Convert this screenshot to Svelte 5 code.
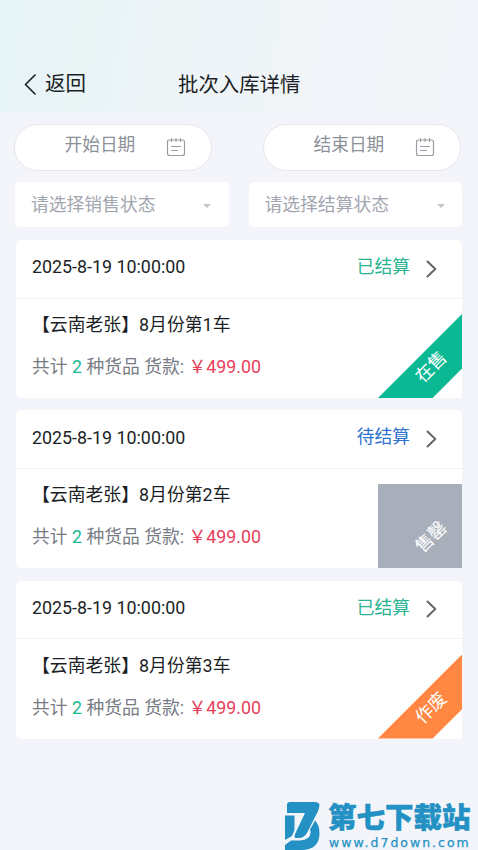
<script>
  const batches = [
    { n: 1, state: '已结算', kind: 'done', tag: '在售', ribbon: 'green' },
    { n: 2, state: '待结算', kind: 'pending', tag: '售罄', ribbon: 'gray' },
    { n: 3, state: '已结算', kind: 'done', tag: '作废', ribbon: 'orange' }
  ];
  const dates = ['开始日期', '结束日期'];
  const selects = ['请选择销售状态', '请选择结算状态'];
</script>

<div class="page">
  <header>
    <svg class="back" width="12" height="21" viewBox="0 0 12 21"><path d="M11 1L1.5 10.5L11 20" /></svg>
    <span class="backtext">返回</span>
    <h1>批次入库详情</h1>
  </header>

  <div class="dates">
    {#each dates as label}
      <div class="date">
        <span>{label}</span>
        <svg width="20" height="20" viewBox="0 0 20 20"><path d="M3.5 3H16.500Q18.500 3 18.500 5V16.500Q18.500 18.500 16.500 18.500H3.500Q1.500 18.500 1.500 16.500V5Q1.500 3 3.500 3ZM5.500 1.500V4.500M10 1.500V4.500M14.500 1.500V4.500M5.500 9.500H14.500M5.500 13.500H11.500" /></svg>
      </div>
    {/each}
  </div>

  <div class="selects">
    {#each selects as label}
      <div class="select"><span>{label}</span><i></i></div>
    {/each}
  </div>

  <main>
    {#each batches as b}
      <section>
        <div class="top">
          <time>2025-8-19 10:00:00</time>
          <span class="state {b.kind}">{b.state}</span>
          <svg width="11" height="18" viewBox="0 0 11 18"><path d="M1.500 1.500L9.300 9L1.500 16.500" /></svg>
        </div>
        <div class="body">
          <h2>【云南老张】8月份第{b.n}车</h2>
          <p>共计 <b>2</b> 种货品 货款: <em>￥499.00</em></p>
        </div>
        <div class="ribbon {b.ribbon}"><span>{b.tag}</span></div>
      </section>
    {/each}
  </main>

  <footer>
    <svg width="36" height="48" viewBox="0 0 36 48">
      <path class="fill" d="M5 0H30Q36 0 34 6Q33 10 31 13L22 31Q19 36 14 36H10Q9 34 10.500 31L20 11H2V3Q2 0 5 0Z" />
      <path class="fill" d="M0 13.500H9.500V28L7 34L0 38Z" />
      <path class="fill" d="M30 18.500Q34.500 23 34.500 31Q34.500 47 18 48H0V43L6 38.500H15Q25 38 25.500 31Q25.500 29 25 27.500Z" />
    </svg>
    <div class="brand"><strong>第七下载站</strong><small>www.d7down.com</small></div>
  </footer>
</div>

<style>
  :global(body) { margin: 0; background: #f4f5fa; }
  * { box-sizing: border-box; }
  .page { position: relative; width: 478px; height: 850px; overflow: hidden; background: #f4f5fa; font-family: Roboto, "Noto Sans CJK SC", sans-serif; color: #1c1f26; }
  svg { fill: none; stroke-linecap: round; stroke-linejoin: round; flex: none; }
  header { height: 112px; padding: 56px 0 0 24px; display: flex; align-items: center; background: linear-gradient(100deg, #e6f4f5 0%, #edf4f7 40%, #f4f5fa 92%); }
  .back { stroke: #20242a; stroke-width: 1.700; }
  .backtext { font-size: 20.500px; line-height: 30px; margin-left: 9px; }
  h1 { margin: 1px 0 0 92px; font-weight: 400; font-size: 20.400px; line-height: 30px; }
  .dates { display: flex; justify-content: space-between; padding: 12px 17px 0 14px; }
  .date { width: 198px; height: 47px; border: 1px solid #e5e7ed; border-radius: 24px; background: #fff; display: flex; align-items: center; padding-left: 49.500px; color: #8c9099; font-size: 17.700px; }
  .date span { width: 101.500px; line-height: 26px; margin-top: -5px; }
  .date svg { stroke: #9a9da3; stroke-width: 1.200; margin-top: -1px; }
  .selects { display: flex; justify-content: space-between; padding: 11px 16px 0 15px; }
  .select { width: 213.500px; height: 45px; background: #fff; border-radius: 5px; display: flex; align-items: center; justify-content: space-between; padding: 0 17.500px 0 16px; color: #a2a6af; font-size: 17.800px; }
  .select span { line-height: 26px; margin-top: 1px; }
  .select i { border: 4px solid transparent; border-top-color: #c0c4cc; border-bottom: 0; margin-top: 2px; }
  main { padding: 13px 16px 0; display: flex; flex-direction: column; gap: 12px; }
  section { position: relative; height: 158px; border-radius: 5px 5px 0 5px; background: #fff; overflow: hidden; }
  section + section { margin-top: .3px; }
  .top { height: 58.500px; border-bottom: 1px solid #f1f2f5; padding: 0 25px 0 16px; display: flex; align-items: center; }
  time { flex: 1; font-size: 17.850px; margin-top: -4px; }
  .state { font-size: 17.800px; line-height: 26px; margin: -3.500px 16px 0 0; }
  .top svg { stroke: #666; stroke-width: 2; }
  .done { color: #27b492; }
  .pending { color: #2d72cf; }
  .body { padding: 13.500px 16px 0; }
  h2 { margin: 0; font-weight: 400; font-size: 17.850px; line-height: 26px; }
  p { margin: 16px 0 0; font-size: 17.800px; line-height: 26px; color: #777b84; white-space: nowrap; }
  b { font-weight: 400; color: #16b892; }
  em { font-style: normal; color: #e83e5b; }
  .ribbon { position: absolute; right: 0; bottom: 0; width: 84px; height: 84px; clip-path: polygon(100% 0, 100% 65%, 65% 100%, 0 100%); color: #fff; }
  .ribbon span { position: absolute; left: 33px; top: 41px; width: 40px; text-align: center; font-size: 17.800px; line-height: 24px; transform: rotate(-45deg); }
  .green { background: #0bb894; }
  .gray { background: #a9afba; clip-path: none; }
  .orange { background: #ff8742; }
  footer { position: absolute; left: 285px; top: 802px; display: flex; color: #2391c4; }
  .fill { fill: #2391c4; stroke: none; }
  .brand { margin-left: 7px; display: flex; flex-direction: column; }
  strong { font-size: 28.500px; line-height: 34px; font-weight: 900; white-space: nowrap; -webkit-text-stroke: .5px #2391c4; }
  small { font-family: "DejaVu Sans", sans-serif; font-size: 12.500px; line-height: 14px; letter-spacing: 2px; padding-left: 1px; -webkit-text-stroke: .25px #2391c4; }
</style>
